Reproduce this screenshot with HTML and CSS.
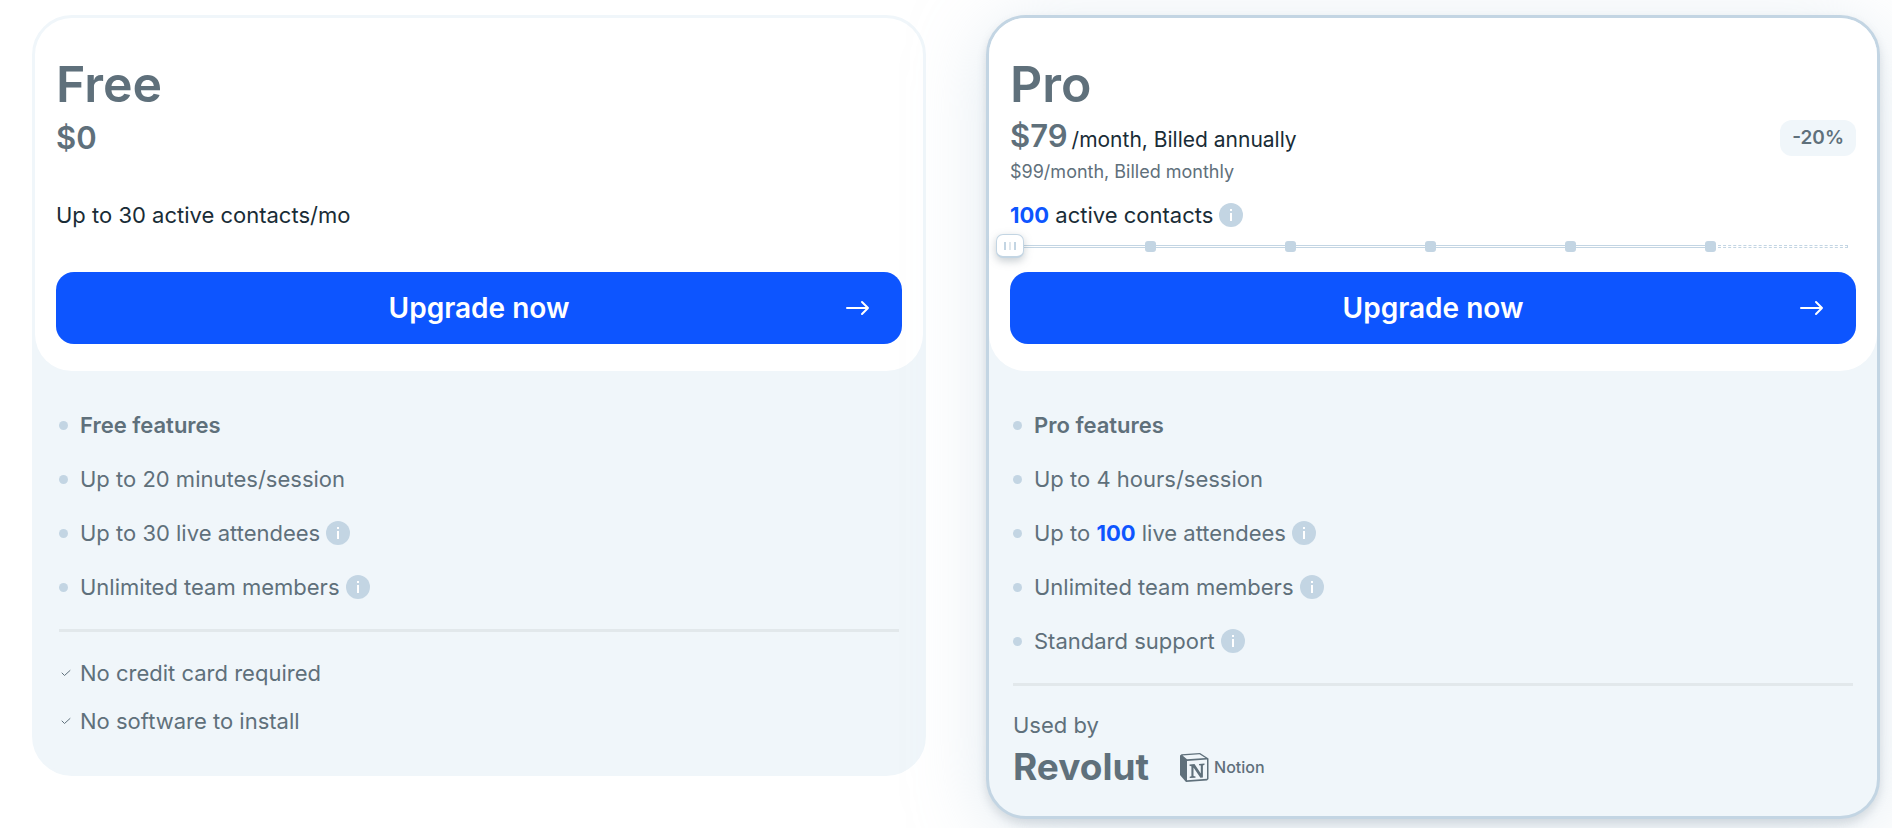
FILE: index.html
```html
<!DOCTYPE html>
<html lang="en">

<head>
    <meta charset="UTF-8">
    <meta name="viewport" content="width=device-width, initial-scale=1.0">
    <title>Pricing</title>
    <link rel="stylesheet" href="styles.css">
</head>

<body>
    <!-- Shared icons -->
    <svg class="sprite" aria-hidden="true">
        <symbol id="info" viewBox="0 0 24 24">
            <circle cx="12" cy="12" r="12" fill="#c3d5e3" />
            <path d="M11 6h2v2h-2zM11 10h2v8h-2z" fill="#fff" />
        </symbol>
        <symbol id="arrow" viewBox="0 0 24 24">
            <path d="M1 12h21M16 6l6 6-6 6" fill="none" stroke="#fff" stroke-width="2" stroke-linecap="round" stroke-linejoin="round" />
        </symbol>
        <symbol id="check" viewBox="0 0 10 8">
            <path d="M1 4l2.500 2.500L9 1.500" fill="none" stroke="#5f707b" stroke-linecap="round" stroke-linejoin="round" />
        </symbol>
    </svg>

    <main class="plans">
        <section class="card">
            <div class="card-header">
                <h2>Free</h2>
                <div class="price-row">
                    <p class="price"><strong>$0</strong></p>
                </div>
                <p class="billing"></p>
                <p class="contacts">Up to 30 active contacts/mo</p>
                <div class="slider-space"></div>
                <button type="button" class="upgrade">Upgrade now <svg class="arrow"><use href="#arrow" /></svg></button>
            </div>
            <div class="card-body">
                <ul class="features">
                    <li><strong>Free features</strong></li>
                    <li>Up to 20 minutes/session</li>
                    <li>Up to 30 live attendees <svg class="info"><use href="#info" /></svg></li>
                    <li>Unlimited team members <svg class="info"><use href="#info" /></svg></li>
                </ul>
                <hr>
                <ul class="checks">
                    <li><svg class="check"><use href="#check" /></svg>No credit card required</li>
                    <li><svg class="check"><use href="#check" /></svg>No software to install</li>
                </ul>
            </div>
        </section>

        <section class="card card-pro">
            <div class="card-header">
                <h2>Pro</h2>
                <div class="price-row">
                    <p class="price"><strong>$79</strong> <span>/month, Billed annually</span></p>
                    <span class="badge">-20%</span>
                </div>
                <p class="billing">$99/month, Billed monthly</p>
                <p class="contacts"><label for="contacts"><b>100</b> active contacts</label> <svg class="info"><use href="#info" /></svg></p>
                <div class="slider">
                    <span class="line"></span>
                    <span class="tick"></span>
                    <span class="line"></span>
                    <span class="tick"></span>
                    <span class="line"></span>
                    <span class="tick"></span>
                    <span class="line"></span>
                    <span class="tick"></span>
                    <span class="line"></span>
                    <span class="tick"></span>
                    <span class="line line-dashed"></span>
                    <input type="range" id="contacts" min="0" max="6" value="0">
                </div>
                <button type="button" class="upgrade">Upgrade now <svg class="arrow"><use href="#arrow" /></svg></button>
            </div>
            <div class="card-body">
                <ul class="features">
                    <li><strong>Pro features</strong></li>
                    <li>Up to 4 hours/session</li>
                    <li><span>Up to <b>100</b> live attendees</span> <svg class="info"><use href="#info" /></svg></li>
                    <li>Unlimited team members <svg class="info"><use href="#info" /></svg></li>
                    <li>Standard support <svg class="info"><use href="#info" /></svg></li>
                </ul>
                <hr>
                <p class="used-by">Used by</p>
                <div class="logos">
                    <span class="revolut">Revolut</span>
                    <span class="notion">
                        <svg width="29" height="29" viewBox="0 0 29 29" aria-hidden="true">
                            <path d="M0 2.500L1.500 1.300 20 0 28.500 5.500V26L27 27.500 6 29 0 22z" fill="#5f707b" />
                            <path d="M2.500 2.500L19.500 1.300 25.500 5 7 6.200zM7 8L27 6.600V25.800L7 27.300z" fill="#f0f6fa" />
                            <path d="M9.500 11.500l5-.4 6.300 9.500v-8l-1.800-.4v-1.300l5.500-.4v1.300l-1.600.6v12.200l-2.500.2-6.900-10.300v8.500l2 .4v1.300l-5.800.4v-1.300l1.700-.6V13.200l-1.900-.4z" fill="#5f707b" />
                        </svg>
                        Notion
                    </span>
                </div>
            </div>
        </section>
    </main>
</body>

</html>
```

FILE: styles.css
```css
body {
    font-family: Inter, "Noto Sans", sans-serif;
    font-size: 22px;
    margin: 0;
    color: #5f707b;
    background-color: #fff;
}

h2, p, ul {
    margin: 0;
    padding: 0;
}

strong {
    font-weight: 600;
}

b {
    font-weight: 700;
    color: #0d55ff;
}

.sprite {
    display: none;
}

.plans {
    display: grid;
    grid-template-columns: 1fr 1fr;
    align-items: start;
    gap: 60px;
    padding: 15px 12px 10px 32px;
    overflow: hidden;
}

.card {
    border: 3px solid #f0f6fa;
    border-radius: 40px;
    background-color: #f0f6fa;
}

.card-pro {
    border-color: #c3d5e3;
    box-shadow: 0 5px 10px rgba(95, 112, 123, 0.2), 0 12px 72px rgba(195, 213, 227, 0.5);
}

/* Card header */
.card-header {
    display: flex;
    flex-direction: column;
    padding: 36px 21px 27px;
    border-radius: 37px;
    background-color: #fff;
}

h2 {
    font-size: 50px;
    font-weight: 600;
    line-height: 60px;
}

.price-row {
    display: flex;
    align-items: center;
    justify-content: space-between;
    height: 48px;
}

.price {
    display: flex;
    align-items: baseline;
    gap: 4px;
    font-size: 21px;
    line-height: 50px;
    color: #192c36;
}

.price strong {
    font-size: 31px;
    color: #5f707b;
}

.badge {
    padding: 0 12px;
    border-radius: 12px;
    font-size: 19px;
    font-weight: 600;
    line-height: 36px;
    background-color: #f0f6fa;
}

.billing {
    height: 20px;
    font-size: 18px;
    line-height: 20px;
}

.contacts {
    display: flex;
    align-items: center;
    gap: 6px;
    height: 30px;
    margin-top: 18px;
    color: #192c36;
}

.info {
    width: 24px;
    height: 24px;
}

/* Slider */
.slider,
.slider-space {
    height: 24px;
    margin: 4px 0 14px;
}

.slider {
    position: relative;
    display: flex;
    align-items: center;
    margin-right: 8px;
    padding-left: 6px;
}

.line {
    flex: 1;
    height: 1px;
    border: 1px solid #c3d5e3;
    border-width: 1px 0;
}

.line-dashed {
    margin-left: 2px;
    border-style: dashed;
    border-right-width: 1px;
}

.tick {
    width: 11px;
    height: 11px;
    border-radius: 3px;
    background-color: #c3d5e3;
}

.slider input {
    position: absolute;
    top: 0;
    left: -14px;
    width: calc(100% + 28px);
    height: 24px;
    margin: 0;
    background: none;
    appearance: none;
    cursor: pointer;
}

.slider input::-webkit-slider-thumb {
    appearance: none;
    box-sizing: border-box;
    width: 28px;
    height: 24px;
    border: 1px solid #c3d5e3;
    border-bottom-width: 2px;
    border-radius: 7px;
    background: linear-gradient(90deg, #c3d5e3 2px, #fff 2px, #fff 5px, #dfe7ed 5px, #dfe7ed 7px, #fff 7px, #fff 10px, #c3d5e3 10px) center / 12px 8px no-repeat, #fff;
    box-shadow: 0 3px 8px rgba(95, 112, 123, 0.35);
}

.upgrade {
    position: relative;
    height: 72px;
    border: none;
    border-radius: 18px;
    font-family: inherit;
    font-size: 28px;
    font-weight: 600;
    color: #fff;
    background-color: #0d55ff;
    cursor: pointer;
}

.upgrade:hover {
    background-color: #0046e5;
}

.arrow {
    position: absolute;
    top: 24px;
    right: 32px;
    width: 24px;
    height: 24px;
}

/* Card body */
.card-body {
    padding: 27px 24px 28px;
}

.features,
.checks {
    list-style: none;
}

.features li {
    display: flex;
    align-items: center;
    gap: 6px;
    height: 54px;
}

.features li::before {
    content: "";
    width: 9px;
    height: 9px;
    margin-right: 6px;
    border-radius: 50%;
    background-color: #c3d5e3;
}

hr {
    height: 3px;
    margin: 15px 0 17px;
    border: none;
    background-color: #e2e8eb;
}

.checks li {
    display: flex;
    align-items: center;
    height: 48px;
}

.check {
    width: 10px;
    height: 8px;
    margin: 0 9px 0 2px;
}

.used-by {
    padding-top: 4px;
    line-height: 36px;
}

.logos {
    display: flex;
    align-items: center;
    gap: 31px;
    height: 30px;
    margin: 9px 0 6px;
}

.revolut {
    font-size: 37px;
    font-weight: 700;
    line-height: 30px;
}

.notion {
    display: flex;
    align-items: center;
    gap: 5px;
    font-size: 16px;
    font-weight: 500;
}
```
